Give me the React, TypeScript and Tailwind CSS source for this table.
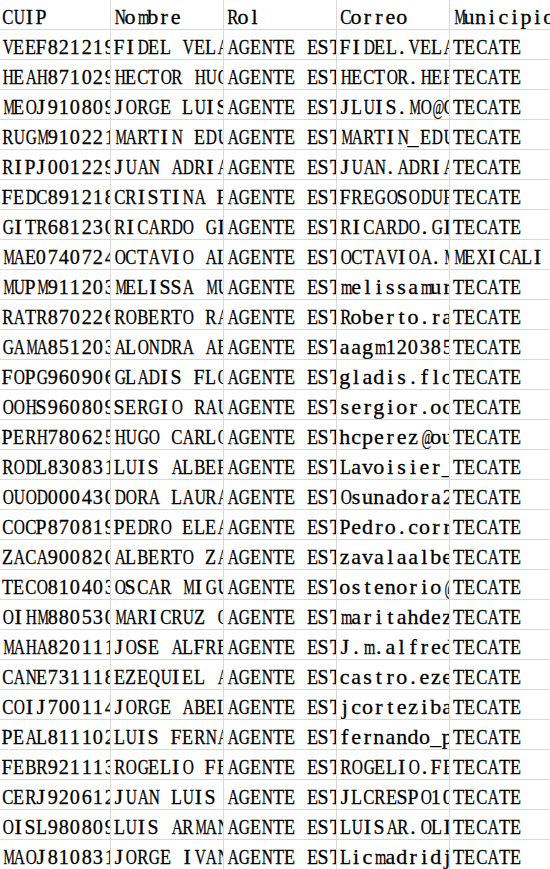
const header = ["CUIP", "Nombre", "Rol", "Correo", "Municipio"];

const rows: string[][] = [
  ["VEEF821219HBCLRD07", "FIDEL VELARDE RODRIGUEZ", "AGENTE ESTATAL", "FIDEL.VELARDE@GMAIL.COM", "TECATE"],
  ["HEAH871029HBCRRC02", "HECTOR HUGO HERNANDEZ", "AGENTE ESTATAL", "HECTOR.HERNANDEZ@GMAIL.COM", "TECATE"],
  ["MEOJ910809HBCRRR05", "JORGE LUIS MORENO", "AGENTE ESTATAL", "JLUIS.MO@GMAIL.COM", "TECATE"],
  ["RUGM910221HBCZRR01", "MARTIN EDUARDO RUIZ", "AGENTE ESTATAL", "MARTIN_EDUARDO@HOTMAIL.COM", "TECATE"],
  ["RIPJ001229HBCVRN09", "JUAN ADRIAN RIVERA", "AGENTE ESTATAL", "JUAN.ADRIAN@GMAIL.COM", "TECATE"],
  ["FEDC891218MBCRLR04", "CRISTINA FREGOSO", "AGENTE ESTATAL", "FREGOSODURAN@GMAIL.COM", "TECATE"],
  ["GITR681230HBCLRC06", "RICARDO GIL TORRES", "AGENTE ESTATAL", "RICARDO.GIL@GMAIL.COM", "TECATE"],
  ["MAE0740724HBCRSC03", "OCTAVIO ALVAREZ", "AGENTE ESTATAL", "OCTAVIOA.MARTINEZ@GMAIL.COM", "MEXICALI"],
  ["MUPM911203MBCRRL08", "MELISSA MURILLO", "AGENTE ESTATAL", "melissamurillo@gmail.com", "TECATE"],
  ["RATR870226HBCMRB02", "ROBERTO RAMIREZ", "AGENTE ESTATAL", "Roberto.ramirez@gmail.com", "TECATE"],
  ["GAMA851203MBCRLL05", "ALONDRA ABIGAIL", "AGENTE ESTATAL", "aagm120385@gmail.com", "TECATE"],
  ["FOPG960906MBCLRL01", "GLADIS FLORES", "AGENTE ESTATAL", "gladis.flores@gmail.com", "TECATE"],
  ["OOHS960809HBCCRR07", "SERGIO RAUL OCHOA", "AGENTE ESTATAL", "sergior.ochoa@gmail.com", "TECATE"],
  ["PERH780625HBCRRG04", "HUGO CARLOS PEREZ", "AGENTE ESTATAL", "hcperez@outlook.com", "TECATE"],
  ["RODL830831HBCDPS09", "LUIS ALBERTO RODRIGUEZ", "AGENTE ESTATAL", "Lavoisier_rodl@gmail.com", "TECATE"],
  ["OUOD000430MBCSRR06", "DORA LAURA OSUNA", "AGENTE ESTATAL", "Osunadora2000@gmail.com", "TECATE"],
  ["COCP870819HBCRRD03", "PEDRO ELEAZAR CORRAL", "AGENTE ESTATAL", "Pedro.corral@gmail.com", "TECATE"],
  ["ZACA900820HBCVLL08", "ALBERTO ZAVALA", "AGENTE ESTATAL", "zavalaalberto@gmail.com", "TECATE"],
  ["TECO810403HBCNRS02", "OSCAR MIGUEL TENORIO", "AGENTE ESTATAL", "ostenorio@gmail.com", "TECATE"],
  ["OIHM880530MBCRRR01", "MARICRUZ ORTIZ", "AGENTE ESTATAL", "maritahdez@gmail.com", "TECATE"],
  ["MAHA820111HBCRLL05", "JOSE ALFREDO MARTINEZ", "AGENTE ESTATAL", "J.m.alfredo@gmail.com", "TECATE"],
  ["CANE731118HBCSRZ07", "EZEQUIEL ANTONIO CASTRO", "AGENTE ESTATAL", "castro.ezequiel@gmail.com", "TECATE"],
  ["COIJ700114HBCRBR04", "JORGE ABEL CORTEZ", "AGENTE ESTATAL", "jcortezibarra@gmail.com", "TECATE"],
  ["PEAL811102HBCRLS06", "LUIS FERNANDO PEREZ", "AGENTE ESTATAL", "fernando_perez@gmail.com", "TECATE"],
  ["FEBR921113HBCRRG03", "ROGELIO FERNANDEZ", "AGENTE ESTATAL", "ROGELIO.FERNANDEZ@GMAIL.COM", "TECATE"],
  ["CERJ920612HBCRSN09", "JUAN LUIS CRESPO", "AGENTE ESTATAL", "JLCRESPO10@GMAIL.COM", "TECATE"],
  ["OISL980809HBCLVS02", "LUIS ARMANDO OLIVAS", "AGENTE ESTATAL", "LUISAR.OLIVAS@GMAIL.COM", "TECATE"],
  ["MAOJ810831HBCDRR08", "JORGE IVAN MADRID", "AGENTE ESTATAL", "Licmadridj@gmail.com", "TECATE"],
];

const widths = ["w-[111px]", "w-[113px]", "w-[113px]", "w-[113px]", "flex-1"];

// squeeze each serif glyph into a half-width cell
function squeeze(ch: string) {
  if ("MW@".includes(ch)) return "scale-x-[0.58]";
  if ("ADGHKNOQUVXY".includes(ch)) return "scale-x-[0.7]";
  if ("BCR".includes(ch)) return "scale-x-[0.76]";
  if ("ELTZ".includes(ch)) return "scale-x-[0.82]";
  if ("FPS".includes(ch)) return "scale-x-[0.9]";
  if ("mw".includes(ch)) return "scale-x-[0.66]";
  if (/[0-9]/.test(ch)) return "scale-x-[0.92]";
  return "scale-x-100";
}

function Mono({ text }: { text: string }) {
  return (
    <>
      {text.split("").map((ch, i) => (
        <span key={i} className={`inline-block w-[11.4px] text-center ${squeeze(ch)}`}>
          {ch === " " ? "\u00a0" : ch}
        </span>
      ))}
    </>
  );
}

function Row({ cells }: { cells: string[] }) {
  return (
    <div className="flex h-[30px] border-b border-[#d9d9d9]">
      {cells.map((c, i) => (
        <div
          key={i}
          className={`${widths[i]} shrink-0 overflow-hidden whitespace-nowrap flex items-end pb-[2px] leading-[20px] ${
            i === 0 ? "pl-[1px]" : "pl-[2px]"
          } ${i < 4 ? "border-r border-[#d9d9d9]" : ""}`}
        >
          <div>
            <Mono text={c} />
          </div>
        </div>
      ))}
    </div>
  );
}

export default function App() {
  return (
    <div
      className="w-[550px] h-[869px] overflow-hidden bg-white text-black text-[22px] [-webkit-text-stroke:0.3px_black]"
      style={{ fontFamily: '"Liberation Serif", "Noto Sans CJK SC", serif' }}
    >
      <Row cells={header} />
      {rows.map((r, i) => (
        <Row key={i} cells={r} />
      ))}
    </div>
  );
}
